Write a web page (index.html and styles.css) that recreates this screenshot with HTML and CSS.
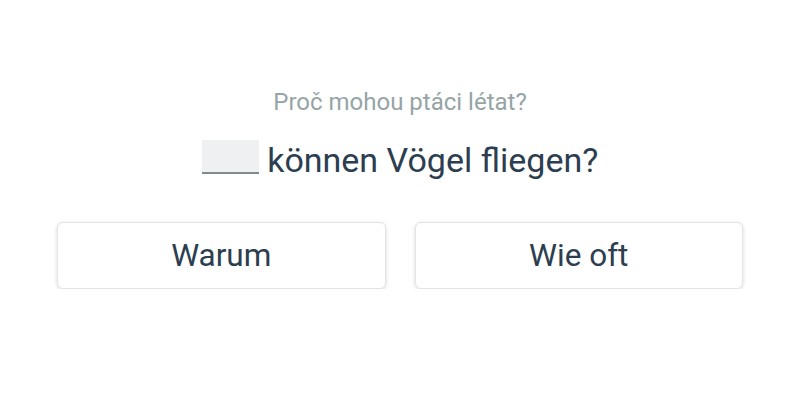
FILE: index.html
```html
<!DOCTYPE html>
<html lang="cs">
<head>
  <meta charset="UTF-8" />
  <title>Doplň slovo</title>
  <link rel="stylesheet" href="styles.css">
</head>
<body>

<div class="exercise">
  <p class="hint">Proč mohou ptáci létat?</p>
  <p class="sentence"><span class="blank"></span> können Vögel fliegen?</p>

  <div class="choices">
    <button class="choice">Warum</button>
    <button class="choice">Wie oft</button>
  </div>
</div>

</body>
</html>
```

FILE: styles.css
```css
body {
  font-family: Roboto, "Noto Sans", sans-serif;
  background: #ffffff;
  color: #2c3e50;
  margin: 0;
  padding: 0;
}

.exercise {
  width: 686px;
  margin: 0 auto;
  padding-top: 88px;
  text-align: center;
}

.hint {
  margin: 0;
  font-size: 24px;
  line-height: 28px;
  color: #95a5a6;
}

.sentence {
  margin: 24px 0 0;
  font-size: 34px;
  line-height: 40px;
  color: #2c3e50;
}

.blank {
  display: inline-block;
  width: 57px;
  height: 32px;
  background: #eef0f2;
  border-bottom: 2px solid #7f8c8d;
  vertical-align: top;
}

.choices {
  display: grid;
  grid-template-columns: 1fr 1fr;
  gap: 29px;
  margin-top: 42px;
}

.choice {
  font-family: inherit;
  font-size: 31.5px;
  color: #2c3e50;
  background: #ffffff;
  height: 67px;
  border: 1px solid #e2e4e6;
  border-radius: 6px;
  box-shadow: 0 1px 4px rgba(0,0,0,0.14);
  cursor: pointer;
}
```
